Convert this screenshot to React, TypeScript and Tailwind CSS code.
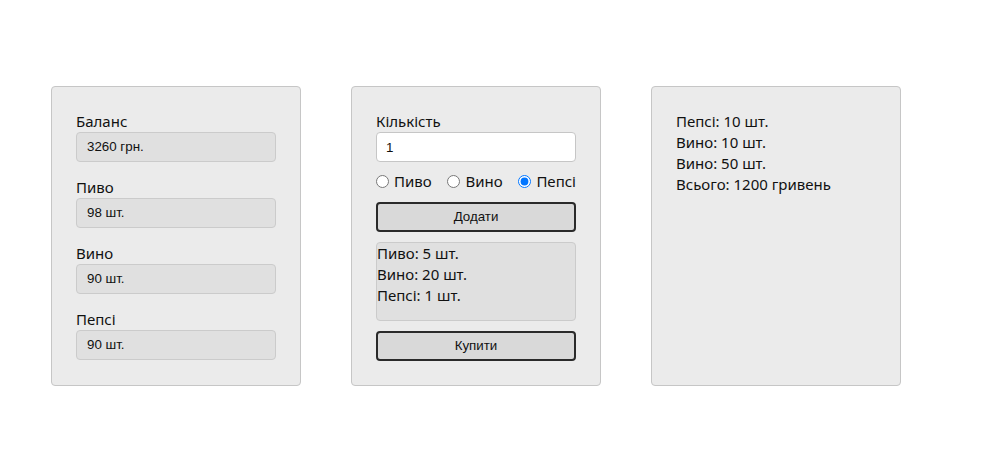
const stock = [
  { label: "Баланс", value: "3260 грн." },
  { label: "Пиво", value: "98 шт." },
  { label: "Вино", value: "90 шт." },
  { label: "Пепсі", value: "90 шт." },
];

const cart = ["Пиво: 5 шт.", "Вино: 20 шт.", "Пепсі: 1 шт."];
const orders = ["Пепсі: 10 шт.", "Вино: 10 шт.", "Вино: 50 шт.", "Всього: 1200 гривень"];

const text = "font-['Noto_Sans',sans-serif] text-[15px] leading-[21px] text-[#111]";
const control = "font-['Liberation_Sans',Arial,sans-serif] text-[13.33px]";

export default function App() {
  return (
    <div className="min-h-screen bg-white">
      <div className="flex gap-[50px] pl-[51px] pt-[86px]">
        {/* balance */}
        <div className="w-[250px] rounded-[4px] border border-[#c6c6c6] bg-[#ebebeb] p-6">
          <div className="flex flex-col gap-[15px]">
            {stock.map((s) => (
              <div key={s.label}>
                <div className={text}>{s.label}</div>
                <div
                  className={`${control} flex h-[30px] items-center rounded-[4px] border border-[#cbcbcb] bg-[#e0e0e0] px-[10px] text-[#111]`}
                >
                  {s.value}
                </div>
              </div>
            ))}
          </div>
        </div>

        {/* order form */}
        <div className="w-[250px] rounded-[4px] border border-[#c6c6c6] bg-[#ebebeb] p-6">
          <div className={text}>Кількість</div>
          <input
            defaultValue="1"
            className={`${control} block h-[30px] w-full rounded-[4px] border border-[#c6c6c6] bg-white px-[9px] text-[#111] outline-none`}
          />
          <div className={`${text} mt-[9px] mb-[10px] flex h-[21px] justify-between`}>
            {["Пиво", "Вино", "Пепсі"].map((n) => (
              <label key={n} className="flex items-center gap-[5px]">
                <input
                  type="radio"
                  name="drink"
                  defaultChecked={n === "Пепсі"}
                  className="m-0 h-[13px] w-[13px] accent-[#0075ff]"
                />
                {n}
              </label>
            ))}
          </div>
          <button
            className={`${control} block h-[30px] w-full rounded-[4px] border-2 border-[#2a2a2a] bg-[#d9d9d9] text-[#111]`}
          >
            Додати
          </button>
          <div className={`${text} mt-[10px] h-[79px] rounded-[4px] border border-[#cbcbcb] bg-[#e0e0e0]`}>
            {cart.map((c) => (
              <div key={c}>{c}</div>
            ))}
          </div>
          <button
            className={`${control} mt-[10px] block h-[30px] w-full rounded-[4px] border-2 border-[#2a2a2a] bg-[#d9d9d9] text-[#111]`}
          >
            Купити
          </button>
        </div>

        {/* history */}
        <div className={`${text} w-[250px] rounded-[4px] border border-[#c6c6c6] bg-[#ebebeb] p-6`}>
          {orders.map((o, i) => (
            <div key={i}>{o}</div>
          ))}
        </div>
      </div>
    </div>
  );
}
